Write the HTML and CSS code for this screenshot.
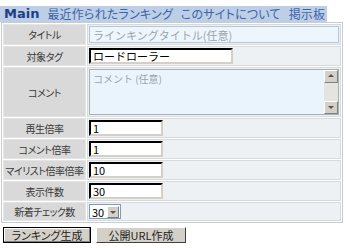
FILE: index.html
```html
<!DOCTYPE html>
<html lang="ja">
<head>
    <meta charset="UTF-8">
    <meta name="viewport" content="width=device-width, initial-scale=1.0">
    <link rel="stylesheet" href="styles.css">
    <title>ランキング生成</title>
</head>
<body>
    <div class="nav">
        <span class="brand">Main</span>
        <a href="#">最近作られたランキング</a>
        <a href="#">このサイトについて</a>
        <a href="#">掲示板</a>
    </div>
    <table class="form">
        <tr>
            <th>タイトル</th>
            <td><input type="text" class="soft wide" placeholder="ラインキングタイトル(任意)"></td>
        </tr>
        <tr>
            <th>対象タグ</th>
            <td><input type="text" class="tag" value="ロードローラー"></td>
        </tr>
        <tr>
            <th>コメント</th>
            <td>
                <div class="memo">
                    <textarea placeholder="コメント (任意)"></textarea>
                    <div class="scroll">
                        <span class="arrow up"></span>
                        <span class="arrow down"></span>
                    </div>
                </div>
            </td>
        </tr>
        <tr>
            <th>再生倍率</th>
            <td><input type="text" class="num" value="1"></td>
        </tr>
        <tr>
            <th>コメント倍率</th>
            <td><input type="text" class="num" value="1"></td>
        </tr>
        <tr>
            <th>マイリスト倍率倍率</th>
            <td><input type="text" class="num" value="10"></td>
        </tr>
        <tr>
            <th>表示件数</th>
            <td><input type="text" class="num" value="30"></td>
        </tr>
        <tr>
            <th>新着チェック数</th>
            <td>
                <div class="select">
                    <span class="value">30</span>
                    <span class="drop"><span class="arrow down"></span></span>
                </div>
            </td>
        </tr>
    </table>
    <div class="actions">
        <button class="pressed">ランキング生成</button>
        <button>公開URL作成</button>
    </div>
</body>
</html>
```

FILE: styles.css
```css
body {
    margin: 0;
    padding-top: 6px;
    font-family: 'Noto Sans CJK JP', 'DejaVu Sans', sans-serif;
    font-feature-settings: "palt";
    background-color: #fff;
    color: #333;
}

.nav {
    display: flex;
    align-items: center;
    gap: 8px;
    width: fit-content;
    height: 16px;
    padding: 0 2px 0 4px;
    background-color: #bccfe6;
    font-size: 12px;
    line-height: 16px;
}

.brand {
    font-family: 'DejaVu Sans', sans-serif;
    font-size: 13px;
    font-weight: bold;
    color: #1d3f86;
}

.nav a {
    color: #3f63a8;
    text-decoration: none;
    letter-spacing: 0.2px;
}

.form {
    margin: 0 0 0 1px;
    width: 342px;
    border: 1px solid #c9cccd;
    border-spacing: 1px;
    font-size: 10px;
}

.form th,
.form td {
    border: 1px solid #d6dadc;
    padding: 1px;
}

.form th {
    width: 79px;
    background-color: #d9d9d9;
    border-color: #e4e4e4;
    font-weight: normal;
    color: #3a3a3a;
    text-align: center;
    white-space: nowrap;
    letter-spacing: -0.5px;
}

.form td {
    background-color: #edf1f3;
}

input {
    display: block;
    box-sizing: border-box;
    margin: 0;
    font-family: inherit;
    font-size: 11px;
    color: #000;
}

input::placeholder,
textarea::placeholder {
    color: #9aa4ac;
}

.soft {
    height: 17px;
    padding: 0 3px;
    background-color: #eef6fd;
    border: 1px solid #b8c6d2;
}

.wide {
    width: 100%;
}

.tag,
.num {
    height: 16px;
    padding: 0 2px;
    background-color: #fff;
    border: 2px inset #8a8a8a;
    border-top-color: #404040;
    border-left-color: #404040;
    border-right-color: #d4d0c8;
    border-bottom-color: #d4d0c8;
}

.tag {
    width: 144px;
}

.num {
    width: 74px;
}

.memo {
    display: flex;
    height: 44px;
    border: 1px solid #a8b0b6;
    background-color: #eaf4fc;
}

.memo textarea {
    flex: 1;
    margin: 0;
    padding: 1px 3px;
    border: none;
    background: transparent;
    resize: none;
    font-family: inherit;
    font-size: 10px;
}

.scroll {
    display: flex;
    flex-direction: column;
    justify-content: space-between;
    width: 14px;
    background-color: #e6e4de;
}

.scroll .arrow,
.drop {
    box-sizing: border-box;
    width: 14px;
    height: 13px;
    background-color: #d4d0c8;
    border: 1px solid;
    border-color: #fff #808080 #808080 #fff;
}

.arrow {
    position: relative;
    display: block;
}

.arrow::after {
    content: "";
    position: absolute;
    left: 3px;
    border-left: 3px solid transparent;
    border-right: 3px solid transparent;
}

.arrow.up::after {
    top: 3px;
    border-bottom: 3px solid #555;
}

.arrow.down::after {
    top: 4px;
    border-top: 3px solid #555;
}

.select {
    display: flex;
    align-items: center;
    box-sizing: border-box;
    width: 32px;
    height: 15px;
    padding: 1px;
    background-color: #fff;
    border: 1px solid #7f9db9;
    font-size: 11px;
    color: #000;
}

.select .value {
    flex: 1;
    padding-left: 1px;
    line-height: 12px;
}

.drop {
    width: 12px;
    height: 12px;
}

.drop .arrow {
    width: 100%;
    height: 100%;
}

.drop .arrow::after {
    left: 2px;
}

.actions {
    display: flex;
    gap: 5px;
    margin: 4px 0 0 3px;
}

button {
    height: 16px;
    padding: 0;
    font-family: inherit;
    font-feature-settings: "palt";
    font-size: 11px;
    line-height: 12px;
    color: #222;
    background-color: #d4d0c8;
    border: 1px solid;
    border-color: #fff #404040 #404040 #fff;
}

.pressed {
    width: 88px;
    border: 1px solid #000;
    box-shadow: inset -1px -1px #808080, inset 1px 1px #fff;
}

.actions button:last-child {
    width: 90px;
}
```
